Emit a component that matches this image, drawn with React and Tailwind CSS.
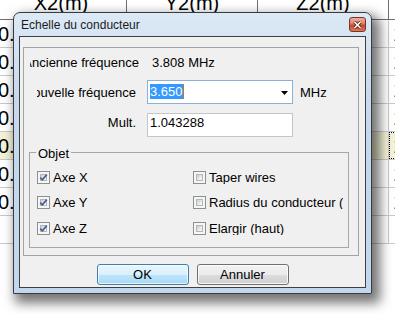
import React from "react";

const rows = [
    { left: "0.00", right: "1.5" },
    { left: "0.00", right: "1.5" },
    { left: "0.00", right: "1.5" },
    { left: "0.00", right: "1.5" },
    { left: "0.00", right: "1.5", hi: true },
    { left: "0.00", right: "1.5" },
    { left: "0.00", right: "1.5" },
    { left: "", right: "" },
];

const headers = ["X2(m)", "Y2(m)", "Z2(m)", ""];

const CheckBox = ({ checked }) => (
    <span className="relative flex w-[13px] h-[13px] shrink-0 border border-[#8e8f8f] bg-[#f6f6f6] p-[2px]">
        <span className="flex-1 border border-[#b3b6ba] bg-[linear-gradient(135deg,#c9ccd1,#eef0f2_70%,#f8f8f8)]" />
        {checked && (
            <svg className="absolute left-0 top-0" width="11" height="11" viewBox="0 0 11 11">
                <path d="M2.2 5.6 L4.4 7.8 L8.8 2.6" fill="none" stroke="#4b5f8c" strokeWidth="1.7" />
            </svg>
        )}
    </span>
);

const Option = ({ label, checked, className }) => (
    <div className={"flex items-center h-[13px] whitespace-nowrap overflow-hidden " + className}>
        <CheckBox checked={checked} />
        <span className="ml-[3px] leading-[15px]">{label}</span>
    </div>
);

const Grid = () => (
    <div className="-ml-[4px] w-[600px] text-[20px] text-black">
        <div className="flex h-[20px] border-b border-[#6f6f6f] overflow-hidden">
            {headers.map((h, i) => (
                <div key={i} className="w-[131px] shrink-0 border-r border-[#6f6f6f] text-center leading-[20px] -mt-[7px]">
                    {h}
                </div>
            ))}
        </div>
        {rows.map((r, i) => (
            <div key={i} className={"flex h-[28px] border-b border-[#c9c9c9] " + (r.hi ? "bg-[#f4f2d6]" : "")}>
                <div className="w-[131px] shrink-0 border-r border-[#c9c9c9] flex items-center pl-[2px] leading-[20px]">{r.left}</div>
                <div className="w-[131px] shrink-0 border-r border-[#c9c9c9]" />
                <div className="w-[131px] shrink-0 border-r border-[#c9c9c9]" />
                <div className={"w-[131px] shrink-0 flex items-center pl-[4px] leading-[20px] " + (r.hi ? "outline-1 outline-dotted outline-black -outline-offset-1" : "")}>
                    {r.right}
                </div>
            </div>
        ))}
    </div>
);

const Dialog = () => (
    <div className="absolute left-[13px] top-[12px] w-[359px] h-[282px] flex flex-col rounded-t-[7px] border border-[#3a3a3a] bg-[linear-gradient(180deg,#dce9f6_0%,#c6d9ee_30%,#c2d7ed_100%)] shadow-[5px_6px_12px_3px_rgba(0,0,0,0.55)] text-[13px] text-black">
        <div className="h-[23px] flex items-center justify-between pl-[7px] pr-[5px]">
            <span className="text-[12px] text-[#1b1b1b]">Echelle du conducteur</span>
            <div className="w-[17px] h-[15px] rounded-[3px] border border-[#7a3426] bg-[linear-gradient(180deg,#eab1a1_0%,#d98066_45%,#c44a2c_55%,#d8765a_100%)] flex items-center justify-center">
                <svg width="9" height="8" viewBox="0 0 9 8">
                    <path d="M1.5 1 L7.5 7 M7.5 1 L1.5 7" stroke="#5b1e12" strokeWidth="3.2" />
                    <path d="M1.5 1 L7.5 7 M7.5 1 L1.5 7" stroke="#ffffff" strokeWidth="1.6" />
                </svg>
            </div>
        </div>

        <div className="mx-[5px] mb-[5px] flex-1 flex flex-col border border-[#3f3f3f] bg-[#f0f0f0]">
            <div className="mt-[10px] ml-[3px] w-[336px] h-[209px] border border-[#a3a3a3] flex flex-col">
                <div className="mt-[7px] flex h-[15px] leading-[15px] whitespace-nowrap">
                    <div className="ml-[6px] w-[109px] overflow-hidden flex justify-end">
                        <span className="shrink-0">Ancienne fréquence</span>
                    </div>
                    <span className="ml-[13px]">3.808 MHz</span>
                </div>

                <div className="mt-[10px] flex h-[24px] whitespace-nowrap">
                    <div className="ml-[13px] w-[99px] overflow-hidden flex justify-end items-center leading-[15px]">
                        <span className="shrink-0">Nouvelle fréquence</span>
                    </div>
                    <div className="ml-[11px] w-[146px] h-[24px] border border-[#8fb0d6] bg-white flex items-start pt-[3px] pl-[2px]">
                        <span className="flex h-[15px] leading-[15px] bg-[#3399ff] text-white">
                            3.650
                            <span className="w-[1px] h-[15px] bg-[#c8741e]" />
                        </span>
                        <svg className="ml-auto mr-[4px] mt-[7px]" width="7" height="4" viewBox="0 0 7 4">
                            <path d="M0 0 H7 L3.5 4 Z" fill="#000" />
                        </svg>
                    </div>
                    <span className="ml-[7px] flex items-center leading-[15px]">MHz</span>
                </div>

                <div className="mt-[9px] flex h-[24px] whitespace-nowrap">
                    <div className="ml-[13px] w-[99px] text-right pt-[2px] leading-[15px]">Mult.</div>
                    <div className="ml-[11px] w-[146px] h-[24px] border border-[#c3c7cc] bg-white pl-[2px] pt-[1px] leading-[15px]">
                        1.043288
                    </div>
                </div>

                <div className="relative mt-[15px] ml-[5px] w-[320px] h-[96px] border border-[#a6a6a6]">
                    <span className="absolute -top-[7px] left-[6px] px-[2px] bg-[#f0f0f0] leading-[15px]">Objet</span>
                    <div className="flex pl-[7px] pt-[18px]">
                        <div className="w-[156px] flex flex-col">
                            <Option label="Axe X" checked />
                            <Option label="Axe Y" checked className="mt-[12px]" />
                            <Option label="Axe Z" checked className="mt-[13px]" />
                        </div>
                        <div className="w-[150px] flex flex-col">
                            <Option label="Taper wires" />
                            <Option label="Radius du conducteur (m)" className="mt-[12px]" />
                            <Option label="Elargir (haut)" className="mt-[13px]" />
                        </div>
                    </div>
                </div>
            </div>

            <div className="mt-[8px] flex justify-center gap-[8px]">
                <button className="w-[92px] h-[21px] rounded-[3px] border border-[#3c7fb1] bg-[linear-gradient(180deg,#eaf6fd_0%,#d9f0fc_50%,#bee6fd_50%,#a7d9f5_100%)] shadow-[inset_0_0_0_1px_rgba(255,255,255,0.7)] flex items-center justify-center leading-[15px]">
                    OK
                </button>
                <button className="w-[92px] h-[21px] rounded-[3px] border border-[#707070] bg-[linear-gradient(180deg,#f2f2f2_0%,#ebebeb_50%,#dddddd_50%,#cfcfcf_100%)] shadow-[inset_0_0_0_1px_rgba(255,255,255,0.8)] flex items-center justify-center leading-[15px]">
                    Annuler
                </button>
            </div>
        </div>
    </div>
);

const App = () => (
    <div className="relative w-[395px] h-[314px] overflow-hidden bg-white font-['Liberation_Sans',Arial,sans-serif]">
        <Grid />
        <Dialog />
    </div>
);

export default App;
